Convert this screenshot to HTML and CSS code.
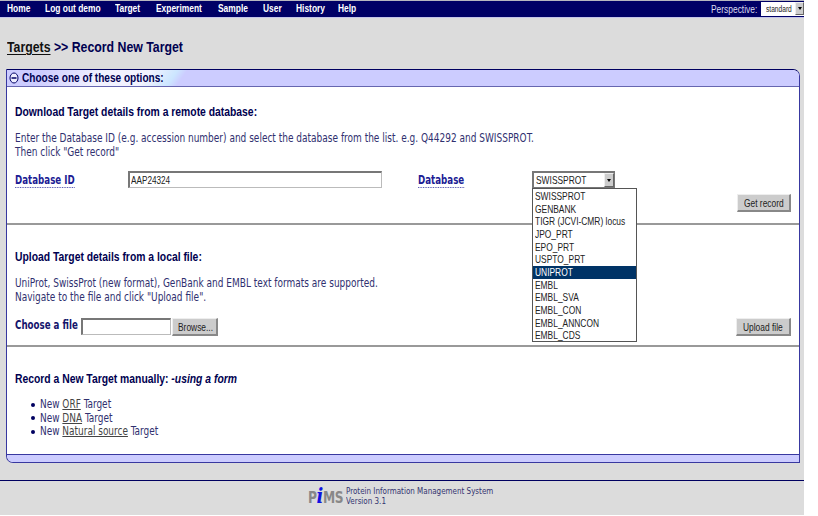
FILE: index.html
```html
<!DOCTYPE html>
<html lang="en">
<head>
<meta charset="utf-8">
<title>Record New Target</title>
<link rel="stylesheet" href="styles.css">
</head>
<body>
<div class="page">
  <nav class="menu">
    <a class="m1">Home</a><a class="m2">Log out demo</a><a class="m3">Target</a><a class="m4">Experiment</a><a class="m5">Sample</a><a class="m6">User</a><a class="m7">History</a><a class="m8">Help</a>
    <span class="perspective">Perspective:</span>
    <span class="mini-select"><span>standard</span><i class="drop"></i></span>
  </nav>
  <h1><span><a>Targets</a> &gt;&gt; Record New Target</span></h1>
  <main class="box">
    <h2 class="box-head">
      <svg width="10" height="12" viewBox="0 0 10 12"><ellipse cx="5" cy="6" rx="4" ry="5" fill="#eef" stroke="#000066"/><path d="M2.5 6h5" stroke="#000066" stroke-width="1.3"/></svg>
      <span>Choose one of these options:</span>
    </h2>
    <section class="download">
      <h3><span>Download Target details from a remote database:</span></h3>
      <p><span>Enter the Database ID (e.g. accession number) and select the database from the list. e.g. Q44292 and SWISSPROT.<br>Then click "Get record"</span></p>
      <div class="row">
        <label class="l-id"><span>Database ID</span></label>
        <div class="input id-input"><span>AAP24324</span></div>
        <label class="l-db"><span>Database</span></label>
        <div class="select"><span>SWISSPROT</span><i class="drop"></i>
          <ul class="options">
            <li><span>SWISSPROT</span></li>
            <li><span>GENBANK</span></li>
            <li><span>TIGR (JCVI-CMR) locus</span></li>
            <li><span>JPO_PRT</span></li>
            <li><span>EPO_PRT</span></li>
            <li><span>USPTO_PRT</span></li>
            <li class="on"><span>UNIPROT</span></li>
            <li><span>EMBL</span></li>
            <li><span>EMBL_SVA</span></li>
            <li><span>EMBL_CON</span></li>
            <li><span>EMBL_ANNCON</span></li>
            <li><span>EMBL_CDS</span></li>
          </ul>
        </div>
      </div>
      <div class="actions"><div class="btn get"><span>Get record</span></div></div>
    </section>
    <section class="upload">
      <h3><span>Upload Target details from a local file:</span></h3>
      <p><span>UniProt, SwissProt (new format), GenBank and EMBL text formats are supported.<br>Navigate to the file and click "Upload file".</span></p>
      <div class="row">
        <label class="l-file"><span>Choose a file</span></label>
        <div class="input file-input"></div>
        <div class="btn browse"><span>Browse...</span></div>
        <div class="btn up"><span>Upload file</span></div>
      </div>
    </section>
    <section class="manual">
      <h3><span>Record a New Target manually: <em>-using a form</em></span></h3>
      <ul class="links">
        <li><span>New <a>ORF</a> Target</span></li>
        <li><span>New <a>DNA</a> Target</span></li>
        <li><span>New <a>Natural source</a> Target</span></li>
      </ul>
    </section>
    <div class="box-foot"></div>
  </main>
  <footer>
    <div class="logo"><span>P<i>i</i>MS</span></div>
    <div class="about"><span>Protein Information Management System<br>Version 3.1</span></div>
  </footer>
</div>
</body>
</html>
```
FILE: styles.css
```css
* { box-sizing: border-box; }
body { margin: 0; background: #fff; }
.page {
  width: 804px; height: 515px; background: #dcdcdc; overflow: hidden;
  font: 11.5px/13.5px "DejaVu Sans Condensed", "DejaVu Sans", sans-serif;
  font-stretch: condensed; color: #30306f; white-space: nowrap;
}
h1, h2, h3, p, ul { margin: 0; padding: 0; font-weight: bold; }
p { font-weight: normal; }

/* Condensed lettering */
.menu a, .perspective, .mini-select span, h1 span, h2 span, h3 span, p span, label span,
.input span, .select span, .btn span, .links span, .logo span, .about span {
  display: inline-block; transform: scaleX(var(--sx)); transform-origin: 0 50%;
}
.menu, h1, h2, h3, .btn, .input, .select { font-family: "Liberation Sans", sans-serif; }

.menu {
  --sx: .765;
  display: flex; height: 18px; background: #000066; color: #fff;
  border-top: 1px solid #b8b8c0; border-bottom: 1px solid #c4c4e8;
  font-size: 11px; line-height: 15px; font-weight: bold; padding-left: 7px;
}
.m1 { width: 38px; } .m2 { width: 70px; } .m3 { width: 41px; } .m4 { width: 62px; }
.m5 { width: 45px; } .m6 { width: 33px; } .m7 { width: 42px; } .m8 { width: 30px; }
.perspective { margin-left: auto; width: 50px; font-weight: normal; line-height: 16px; color: #dde; }
.mini-select {
  --sx: .78;
  display: flex; width: 43px; height: 14px; margin-top: 1px; background: #fff; color: #222;
  font-size: 8.5px; font-weight: normal; line-height: 15px; padding-left: 5px;
}
.mini-select span { width: 29px; }
.drop { background: #ccc; border: 1px solid #eee; border-right-color: #666; border-bottom-color: #666; display: flex; align-items: center; justify-content: center; margin-left: auto; flex: none; }
.drop::after { content: ""; border: 2px solid transparent; border-top: 3px solid #000; border-bottom: 0; }
.mini-select .drop { width: 9px; height: 13px; }
h1 { --sx: .82; height: 51px; padding: 19px 0 0 7px; font-size: 15px; line-height: 20px; color: #000050; }
h1 a { color: #111; text-decoration: underline; text-underline-offset: 2px; }
.box {
  display: flex; flex-direction: column; width: 794px; height: 394px; margin-left: 6px;
  background: #fff; border: 1px solid #3838a0; border-top-color: #000060;
  border-radius: 0 7px 0 7px; overflow: hidden;
}
.box-head {
  --sx: .84;
  display: flex; gap: 3px; align-items: center; height: 17px; padding-left: 2px;
  background: linear-gradient(125deg, #ccf 0 30px, #f2f2ff 80px 118px, #cce6ff 140px, #ccf 148px);
  border-bottom: 1px solid #6666b0; font-size: 12px; line-height: 15px; color: #000050;
}
section { padding: 0 8px; }
.download { height: 138px; border-bottom: 2px solid #999; padding-top: 17px; }
.upload { height: 122px; border-bottom: 2px solid #999; padding-top: 24px; }
.manual { height: 107px; padding-top: 24px; }
h3 { --sx: .863; font-size: 12px; line-height: 16px; color: #000050; }
p { --sx: .869; margin-top: 12px; }
.row { display: flex; }
.download .row { margin-top: 12px; height: 17px; }
label { --sx: .84; font-weight: bold; color: #15156c; }
.l-id, .l-db { color: #1c1c94; padding-top: 3px; }
.l-id span, .l-db span { line-height: 13px; border-bottom: 1px dotted #3333a0; }
.l-id { width: 113px; }
.l-db { width: 114px; }
.input { --sx: .78; height: 17px; background: #fff; border: 2px solid #777; border-right: 1px solid #bbb; border-bottom: 1px solid #bbb; font-size: 10.5px; line-height: 15px; color: #222; padding-left: 1px; }
.id-input { width: 254px; margin-right: 36px; }
.select { --sx: .765; position: relative; display: flex; width: 83px; height: 17px; border: 2px solid #777; border-right-width: 1px; border-bottom-width: 1px; color: #222; font-size: 11px; line-height: 15px; padding-left: 2px; }
.select .drop { width: 10px; }
.options { position: absolute; left: -2px; top: 15px; z-index: 2; width: 105px; height: 154px; border: 1px solid #555; background: #fff; list-style: none; font-weight: normal; line-height: 12.67px; padding-top: 1px; }
.options li { padding-left: 2px; height: 12.67px; }
.options .on { background: #003366; color: #fff; }
.btn { --sx: .8; height: 18px; background: #ccc; color: #222; border: 1px solid #eee; border-right: 2px solid #888; border-bottom: 2px solid #888; font-size: 10.5px; line-height: 16px; }
.actions { display: flex; justify-content: flex-end; margin-top: 6px; }
.get { width: 54px; padding-left: 6px; }
.upload .row { margin-top: 14px; }
.l-file { width: 66px; line-height: 14px; }
.file-input { width: 90px; margin-right: 1px; }
.browse { width: 46px; padding-left: 5px; }
.up { width: 55px; padding-left: 6px; margin-left: auto; }
.links { --sx: .865; list-style: none; margin-top: 11px; padding-left: 15px; font-weight: normal; }
.links li { display: flex; align-items: center; }
.links li::before { content: ""; width: 4px; height: 4px; border-radius: 50%; background: #000060; margin: 0 5px 0 1px; }
.links a { color: #444; text-decoration: underline; }
.box-foot { flex: 1; background: #ccf; border-top: 1px solid #3838a0; }
footer { display: flex; height: 40px; margin-top: 17px; padding: 5px 0 0 308px; border-top: 1px solid #000060; color: #333370; }
.logo { --sx: .85; width: 38px; font-size: 16px; line-height: 22px; font-weight: bold; color: #888; letter-spacing: -.5px; }
.logo i { color: #1010e0; font: italic bold 21px/20px "DejaVu Serif", serif; }
.about { --sx: .885; font-size: 9px; line-height: 10px; }
```
